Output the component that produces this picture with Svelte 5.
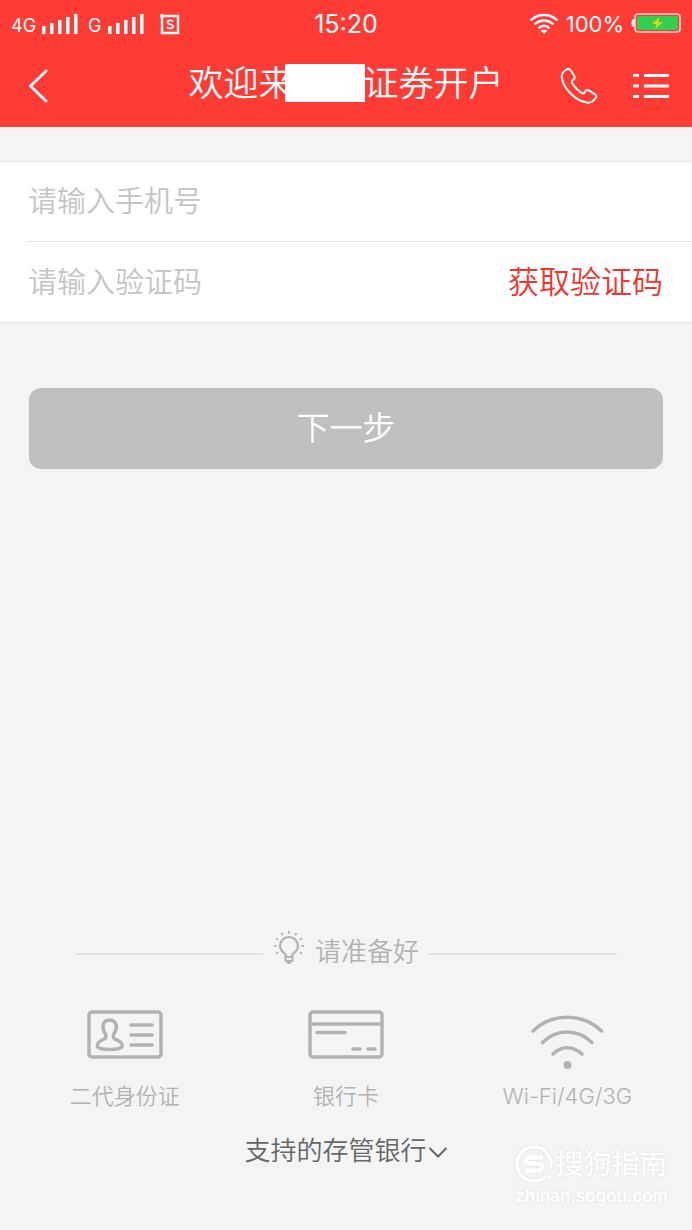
<script lang="ts">
	let phone = '';
	let code = '';

	const signals = ['4G', 'G'];
	const bars = [8, 11, 14, 17, 20];
	const rays = [-120, -90, -60, -30, 0, 30, 60, 90, 120];

	const items = [
		{ icon: 'id', label: '二代身份证' },
		{ icon: 'card', label: '银行卡' },
		{ icon: 'wifi', label: 'Wi-Fi/4G/3G' }
	];
</script>

<div class="page">
	<header>
		<div class="status">
			<div class="status-side">
				{#each signals as name}
					<span class="net">{name}</span>
					<svg class="signal" width="36" height="22" viewBox="0 0 36 22" aria-hidden="true">
						{#each bars as h, i}
							<rect x={i * 8} y={21 - h} width="3.500" height={h} fill="#fff" />
						{/each}
					</svg>
				{/each}
				<svg class="badge" width="20" height="22" viewBox="0 0 20 22" aria-hidden="true">
					<path d="M2 3H18V20H2Z" fill="none" stroke="#fff" stroke-width="2.400" />
					<circle cx="2" cy="3" r="2" fill="#fff" />
					<path
						d="M13 8.500C12 6.800 7.500 6.800 7.500 9.300C7.500 12 13 10.800 13 13.500C13 16 8 16 7 14"
						fill="none"
						stroke="#fff"
						stroke-width="1.800"
					/>
				</svg>
			</div>
			<time>15:20</time>
			<div class="status-side right">
				<svg width="30" height="22" viewBox="0 0 30 22" fill="none" stroke="#fff" stroke-width="2.400" aria-hidden="true">
					<path d="M1.500 7.500C9 .200 21 .200 28.500 7.500" />
					<path d="M5.500 11.500C11 6.200 19 6.200 24.500 11.500" />
					<path d="M9.500 15.300C13 12.200 17 12.200 20.500 15.300" />
					<path d="M11.800 17.800Q15 15 18.200 17.800L15 21.200Z" fill="#fff" stroke="none" />
				</svg>
				<span class="percent">100%</span>
				<svg width="50" height="20" viewBox="0 0 50 20" aria-hidden="true">
					<path d="M3.500 6H3Q.500 6 .500 10T3 14H3.500Z" fill="#fff" />
					<rect x="4" y="1" width="45" height="18" rx="3" fill="none" stroke="#ffd9d3" stroke-width="1.600" />
					<rect x="6" y="3" width="41" height="14" rx="1" fill="#35cf4f" />
					<path d="M28.500 4L21 11H25.500L24 16L32 9H27.500Z" fill="#d8d21c" />
				</svg>
			</div>
		</div>

		<div class="nav">
			<button class="icon-btn back" type="button" aria-label="返回">
				<svg width="20" height="34" viewBox="0 0 20 34" fill="none" stroke="#fff" stroke-width="2.800">
					<path d="M18 2L2.500 17L18 32" stroke-linecap="round" stroke-linejoin="round" />
				</svg>
			</button>
			<h1>欢迎来<span class="mask"></span>证券开户</h1>
			<div class="actions">
				<button class="icon-btn" type="button" aria-label="电话">
					<svg width="38" height="38" viewBox="0 0 38 38" fill="none" stroke="#fff" stroke-width="2" stroke-linejoin="round">
						<path
							d="M6.500 2.500C8 1.500 9.500 2 10.500 3.300L14.300 9C15.300 10.500 14.800 11.500 13.500 12.500C11.500 13.700 11.300 14.300 12.300 16.300C14.300 20 17.500 23.200 21.700 26C23 26.800 23.800 26.700 24.600 25.400L25.600 24C26.400 22.900 27.500 22.700 28.700 23.400L35 27.400C36.500 28.500 36.600 29.700 35.700 31C33.700 34 30.500 36 27 35.600C15.500 34 3.300 21.500 1.700 10.300C1.300 7.200 3.500 4.300 6.500 2.500Z"
						/>
					</svg>
				</button>
				<button class="icon-btn" type="button" aria-label="菜单">
					<svg width="36" height="26" viewBox="0 0 36 26" fill="#fff">
						<path d="M0 1H6V4H0ZM11 1H36V4H11ZM0 11.500H6V14.500H0ZM11 11.500H36V14.500H11ZM0 22H6V25H0ZM11 22H36V25H11Z" />
					</svg>
				</button>
			</div>
		</div>
	</header>

	<main>
		<form on:submit|preventDefault>
			<div class="fields">
				<div class="row">
					<input type="tel" placeholder="请输入手机号" aria-label="手机号" bind:value={phone} />
				</div>
				<div class="row">
					<input type="text" placeholder="请输入验证码" aria-label="验证码" bind:value={code} />
					<button class="get-code" type="button">获取验证码</button>
				</div>
			</div>
			<button class="next" type="submit">下一步</button>
		</form>
	</main>

	<footer>
		<div class="ready">
			<svg width="32" height="36" viewBox="0 0 32 36" fill="none" stroke="#b2b2b2" stroke-width="2" aria-hidden="true">
				<path d="M13 28V25.500C13 23.500 7 21.500 7 16A9 9 0 0 1 25 16C25 21.500 19 23.500 19 25.500V28" stroke-width="2.200" />
				<path d="M12.500 27H19.500V31H12.500ZM14 33H18" />
				{#each rays as a}
					<path d="M16 1V3.500" transform="rotate({a} 16 16)" />
				{/each}
			</svg>
			<span>请准备好</span>
		</div>

		<ul class="items">
			{#each items as item}
				<li>
					<svg
						width="76"
						height="60"
						viewBox="0 0 76 60"
						fill="none"
						stroke="#b2b2b2"
						stroke-width="3.500"
						stroke-linecap="round"
						stroke-linejoin="round"
						aria-hidden="true"
					>
						{#if item.icon === 'id'}
							<rect x="2" y="2" width="72" height="45" rx="3" />
							<path d="M44 15H65M44 25H65M44 35H65" />
							<path
								d="M22.500 10C18 10 15.500 13.500 16 17.500C16.300 20.500 17.300 22.500 18.500 24.200C20 28 18 29 14.500 30.500C11 32 10 33.500 10.500 37C14 40.300 31.500 40.300 35 37C35.500 33.500 34.500 32 31 30.500C27 29 25.500 28 26.700 24.200C28 22.500 29 20.500 29.300 17.500C29.800 13.500 27 10 22.500 10Z"
							/>
						{:else if item.icon === 'card'}
							<rect x="2" y="2" width="72" height="45" rx="3" />
							<path d="M3 14H73M9 22.500H37M45 39H52M60 39H67" />
						{:else}
							<path d="M4 21C23 2.500 53 2.500 72.500 21" />
							<path d="M13.500 32.500C27.500 18.500 48.500 18.500 63 32.500" />
							<path d="M24 44C32 35.500 44 35.500 53 44" />
							<circle cx="38.500" cy="55" r="4" fill="#b2b2b2" stroke="none" />
						{/if}
					</svg>
					<span>{item.label}</span>
				</li>
			{/each}
		</ul>

		<button class="banks" type="button">
			支持的存管银行
			<svg width="20" height="14" viewBox="0 0 20 14" fill="none" stroke="#666" stroke-width="2" aria-hidden="true">
				<path d="M1.500 4L10 12.500L18.500 4" />
			</svg>
		</button>
	</footer>

	<div class="watermark">
		<div class="wm-name">
			<svg width="38" height="38" viewBox="0 0 38 38" fill="none" stroke="#fff" aria-hidden="true">
				<path d="M31 31A17 17 0 1 1 35.500 23" stroke-width="3" />
				<path d="M28 12.500H16C9 12.500 9 18.500 16 18.500H22C29 18.500 29 25.500 22 25.500H10" stroke-width="4.500" />
				<circle cx="34" cy="32" r="2" fill="#fff" stroke="none" />
			</svg>
			<span>搜狗指南</span>
		</div>
		<div class="wm-url">zhinan.sogou.com</div>
	</div>
</div>

<style>
	:global(body) {
		background: #f4f4f4;
	}
	.page {
		position: relative;
		display: flex;
		flex-direction: column;
		min-height: 100vh;
		background: #f4f4f4;
		font-family: Inter, 'Noto Sans CJK SC', sans-serif;
		font-weight: 350;
	}
	button,
	input {
		margin: 0;
		padding: 0;
		border: 0;
		background: none;
		font: inherit;
		color: inherit;
	}
	svg {
		display: block;
		flex: none;
	}

	header {
		background: #ff3b35;
		color: #fff;
	}
	.status {
		display: grid;
		grid-template-columns: 1fr auto 1fr;
		align-items: center;
		height: 48px;
		padding: 0 11px;
	}
	.status-side {
		display: flex;
		align-items: center;
		gap: 6px;
	}
	.right {
		justify-content: flex-end;
		gap: 7px;
	}
	.net {
		font-size: 18px;
		font-weight: 400;
		line-height: 24px;
		padding-top: 4px;
	}
	.signal {
		margin-right: 4px;
	}
	.badge {
		margin-left: 6px;
	}
	time {
		font-size: 25px;
		font-weight: 400;
	}
	.percent {
		font-size: 22px;
		font-weight: 400;
	}
	.right svg:last-child {
		margin-bottom: 2px;
	}
	.nav {
		display: grid;
		grid-template-columns: 1fr auto 1fr;
		align-items: center;
		height: 79px;
		padding: 0 23px 4px 28px;
		box-sizing: border-box;
	}
	.icon-btn {
		cursor: pointer;
	}
	.back {
		justify-self: start;
	}
	h1 {
		display: flex;
		align-items: center;
		margin: 0;
		padding: 0 5px 5px 0;
		font-size: 35px;
		font-weight: inherit;
		line-height: 48px;
		white-space: nowrap;
	}
	.mask {
		width: 80px;
		height: 38px;
		margin: 0 -1px 0 -9px;
		background: #fff;
	}
	.actions {
		display: flex;
		align-items: center;
		justify-content: flex-end;
		gap: 35px;
	}

	.fields {
		margin-top: 34px;
		padding-left: 27px;
		background: #fff;
		border-top: 1px solid #e6e6e6;
		border-bottom: 1px solid #e6e6e6;
	}
	.row {
		display: flex;
		align-items: center;
		height: 79px;
		padding-right: 29px;
	}
	.row + .row {
		height: 80px;
		border-top: 1px solid #e6e6e6;
	}
	.row input {
		flex: 1;
		min-width: 0;
		height: 48px;
		padding-left: 1px;
		font-size: 29px;
		color: #333;
		outline: none;
	}
	.row input::placeholder {
		color: #c4c4c4;
		opacity: 1;
	}
	.get-code {
		padding-bottom: 6px;
		font-size: 31px;
		color: #f0352f;
		cursor: pointer;
	}
	.next {
		display: block;
		width: calc(100% - 58px);
		height: 81px;
		margin: 65px 29px 0;
		padding-bottom: 6px;
		border-radius: 12px;
		background: #c0c0c0;
		color: #fff;
		font-size: 33px;
	}

	footer {
		margin-top: auto;
		padding: 0 14px 60px;
		color: #b2b2b2;
	}
	.ready {
		display: flex;
		align-items: center;
		gap: 10px;
		padding: 0 61px;
		font-size: 26px;
		line-height: 40px;
	}
	.ready svg {
		margin-bottom: 8px;
	}
	.ready::before,
	.ready::after {
		content: '';
		flex: 1;
		height: 2px;
		margin-top: 4px;
		background: #e2e2e2;
	}
	.items {
		display: grid;
		grid-template-columns: repeat(3, 1fr);
		margin: 36px 0 0;
		padding: 0;
		list-style: none;
	}
	.items li {
		display: flex;
		flex-direction: column;
		align-items: center;
		gap: 10px;
		font-size: 22px;
		line-height: 32px;
	}
	.banks {
		display: flex;
		align-items: center;
		gap: 1px;
		margin: 20px auto 0;
		font-size: 26px;
		line-height: 38px;
		color: #666;
		cursor: pointer;
	}

	/* sits over the page corner */
	.watermark {
		position: absolute;
		right: 24px;
		bottom: 22px;
		color: #fff;
		filter: drop-shadow(0 0 1px #dedede);
		pointer-events: none;
	}
	.wm-name {
		display: flex;
		align-items: center;
		gap: 2px;
		font-size: 28px;
		font-weight: 400;
		line-height: 40px;
	}
	.wm-url {
		font-size: 17px;
		font-weight: 600;
		line-height: 24px;
		text-align: right;
	}
</style>
